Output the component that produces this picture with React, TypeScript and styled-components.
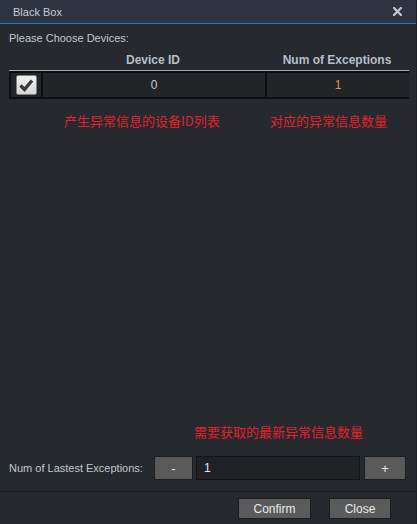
import React, { FC, useState } from 'react'
import styled, { createGlobalStyle } from 'styled-components'

const GlobalStyle = createGlobalStyle`
  html, body {
    margin: 0;
    padding: 0;
    background: #26292d;
    font-family: "Liberation Sans", Arial, "Noto Sans CJK SC", sans-serif;
  }
`

const Window = styled.div`
  width: 417px;
  height: 524px;
  box-sizing: border-box;
  display: flex;
  flex-direction: column;
  background: #26292d;
  border-right: 1px solid #1d2024;
`

const TitleBar = styled.div`
  height: 23px;
  display: flex;
  align-items: center;
  justify-content: space-between;
  padding: 0 14px 0 13px;
  background: #2c353f;
  border-bottom: 1px solid #2f77c0;
  color: #c4ccd4;
  font-size: 11px;
`

const CloseIcon = styled.svg`
  width: 9px;
  height: 9px;
  display: block;
`

const Body = styled.div`
  flex: 1;
  display: flex;
  flex-direction: column;
  padding: 8px 8px 0 9px;
`

const Label = styled.div`
  color: #c2c6ca;
  font-size: 11px;
  line-height: 13px;
`

const Table = styled.div`
  margin-top: 5px;
  width: 400px;
`

const HeaderRow = styled.div`
  display: grid;
  grid-template-columns: 32px 224px 144px;
  height: 20px;
  border-bottom: 1px solid #a3a8ae;
`

const HeaderCell = styled.div`
  display: flex;
  align-items: center;
  justify-content: center;
  color: #b6bec8;
  font-size: 12px;
  font-weight: bold;
`

const DataRow = styled.div`
  display: grid;
  grid-template-columns: 30px 222px 142px;
  column-gap: 2px;
  height: 24px;
  border: 2px solid #0d0e0f;
  background: #0d0e0f;
`

const DataCell = styled.div<{ $accent?: boolean }>`
  display: flex;
  align-items: center;
  justify-content: center;
  background: #222427;
  color: ${(p) => (p.$accent ? '#d49a52' : '#c8ccd0')};
  font-size: 12px;
`

const CheckBox = styled.div<{ $checked: boolean }>`
  width: 21px;
  height: 20px;
  box-sizing: border-box;
  border: 1px solid #7e8286;
  border-radius: 2px;
  background: linear-gradient(#f0f0f0, #d8d8d8);
  display: flex;
  align-items: center;
  justify-content: center;
  cursor: pointer;

  svg {
    visibility: ${(p) => (p.$checked ? 'visible' : 'hidden')};
  }
`

const NoteRow = styled.div`
  display: flex;
  margin-top: 13px;
  padding-left: 55px;
`

const Note = styled.div<{ $width?: number }>`
  color: #e3212b;
  font-size: 13px;
  line-height: 17px;
  font-family: "Noto Sans CJK SC", "Liberation Sans", sans-serif;
  width: ${(p) => (p.$width ? `${p.$width}px` : 'auto')};
`

const BottomNote = styled(Note)`
  margin-top: auto;
  margin-left: 185px;
  margin-bottom: 16px;
`

const Controls = styled.div`
  display: flex;
  align-items: center;
  height: 24px;
  margin-bottom: 11px;
`

const ControlLabel = styled(Label)`
  width: 145px;
`

const StepButton = styled.button<{ $width: number }>`
  width: ${(p) => p.$width}px;
  height: 24px;
  box-sizing: border-box;
  padding: 0;
  background: #5a5a5a;
  border: 1px solid #1c1d1e;
  color: #eceff2;
  font-family: "Liberation Sans", Arial, sans-serif;
  font-size: 13px;
  cursor: pointer;
`

const NumInput = styled.input`
  width: 164px;
  height: 24px;
  box-sizing: border-box;
  margin: 0 4px 0 3px;
  padding: 0 7px;
  background: #1f2124;
  border: 1px solid #131415;
  color: #e2e6ea;
  font-family: "Liberation Sans", Arial, sans-serif;
  font-size: 12px;
  outline: none;
`

const Footer = styled.div`
  height: 33px;
  box-sizing: border-box;
  border-top: 1px solid #17191b;
  display: flex;
  justify-content: flex-end;
  align-items: flex-start;
  gap: 18px;
  padding: 6px 25px 0 0;
`

const FooterButton = styled.button<{ $width: number }>`
  width: ${(p) => p.$width}px;
  height: 21px;
  box-sizing: border-box;
  padding: 0;
  background: #5b5b5b;
  border: 1px solid #1c1d1e;
  color: #e8eaec;
  font-family: "Liberation Sans", Arial, sans-serif;
  font-size: 12px;
  cursor: pointer;
`

const App: FC = () => {
  const [checked, setChecked] = useState(true)
  const [count, setCount] = useState(1)

  return (
    <>
      <GlobalStyle />
      <Window>
        <TitleBar>
          <span>Black Box</span>
          <CloseIcon viewBox="0 0 9 9">
            <path d="M1 1 L8 8 M8 1 L1 8" stroke="#c3c9cf" strokeWidth="2.2" strokeLinecap="square" />
          </CloseIcon>
        </TitleBar>
        <Body>
          <Label>Please Choose Devices:</Label>
          <Table>
            <HeaderRow>
              <HeaderCell />
              <HeaderCell>Device ID</HeaderCell>
              <HeaderCell>Num of Exceptions</HeaderCell>
            </HeaderRow>
            <DataRow>
              <DataCell>
                <CheckBox $checked={checked} onClick={() => setChecked((old) => !old)}>
                  <svg width="15" height="14" viewBox="0 0 15 14">
                    <path d="M1.5 7.5 L5.5 11.5 L13 2.5" fill="none" stroke="#3a3a3a" strokeWidth="3.4" />
                  </svg>
                </CheckBox>
              </DataCell>
              <DataCell>0</DataCell>
              <DataCell $accent>1</DataCell>
            </DataRow>
          </Table>
          <NoteRow>
            <Note $width={206}>产生异常信息的设备ID列表</Note>
            <Note>对应的异常信息数量</Note>
          </NoteRow>
          <BottomNote>需要获取的最新异常信息数量</BottomNote>
          <Controls>
            <ControlLabel>Num of Lastest Exceptions:</ControlLabel>
            <StepButton $width={39} onClick={() => setCount((c) => Math.max(0, c - 1))}>
              -
            </StepButton>
            <NumInput value={count} onChange={(e) => setCount(Number(e.target.value) || 0)} />
            <StepButton $width={42} onClick={() => setCount((c) => c + 1)}>
              +
            </StepButton>
          </Controls>
        </Body>
        <Footer>
          <FooterButton $width={73}>Confirm</FooterButton>
          <FooterButton $width={62}>Close</FooterButton>
        </Footer>
      </Window>
    </>
  )
}

export default App
